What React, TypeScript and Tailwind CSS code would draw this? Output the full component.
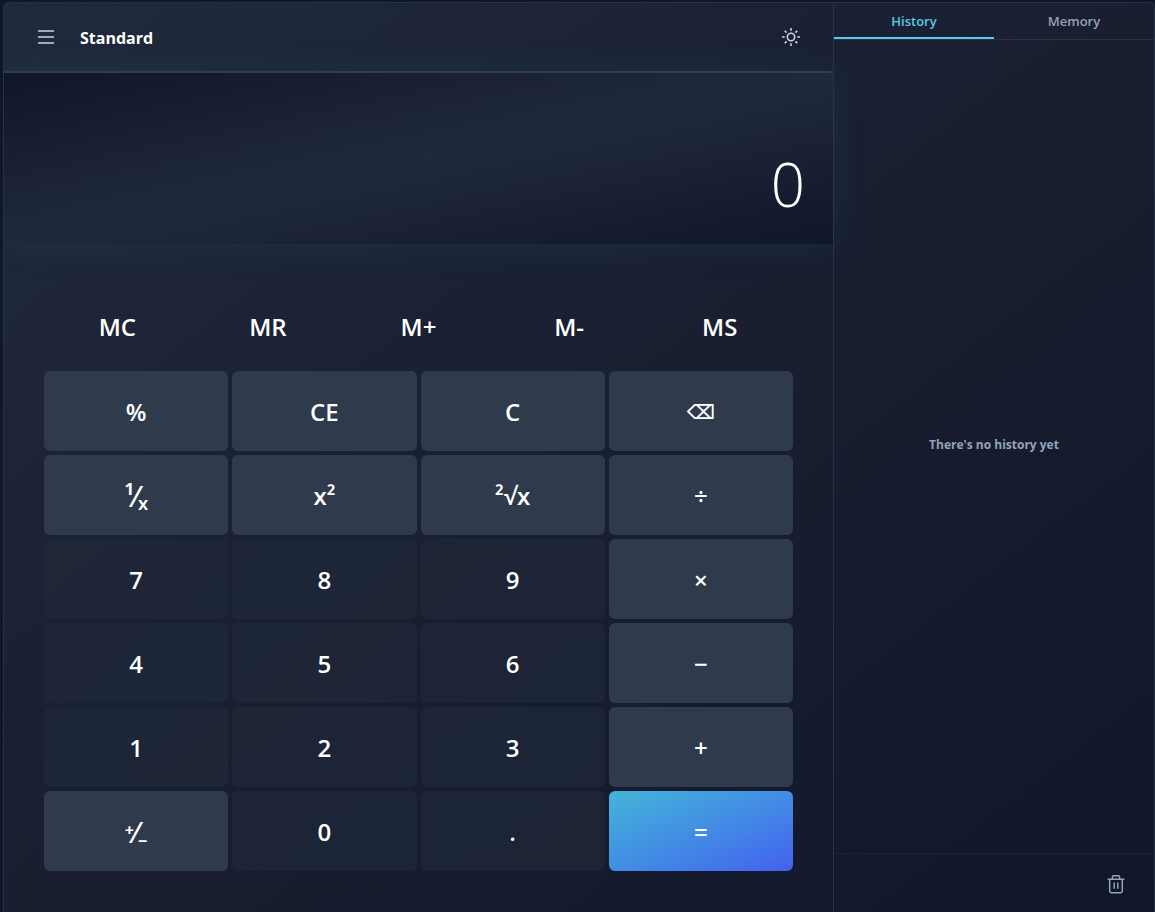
import { useState } from "react";

type KeyKind = "number" | "operator" | "equals";
type Key = { label: string; name: string; kind: KeyKind; size?: string };

const memoryKeys = [
  { label: "MC", name: "Memory clear" },
  { label: "MR", name: "Memory recall" },
  { label: "M+", name: "Memory add" },
  { label: "M-", name: "Memory subtract" },
  { label: "MS", name: "Memory store" },
];

const keys: Key[] = [
  { label: "%", name: "Percent", kind: "operator" },
  { label: "CE", name: "Clear entry", kind: "operator" },
  { label: "C", name: "Clear", kind: "operator" },
  { label: "⌫", name: "Backspace", kind: "operator", size: "text-xl" },
  { label: "¹⁄ₓ", name: "Reciprocal", kind: "operator", size: "text-[28px]" },
  { label: "x²", name: "Square", kind: "operator" },
  { label: "²√x", name: "Square root", kind: "operator" },
  { label: "÷", name: "Divide", kind: "operator" },
  { label: "7", name: "7", kind: "number" },
  { label: "8", name: "8", kind: "number" },
  { label: "9", name: "9", kind: "number" },
  { label: "×", name: "Multiply", kind: "operator" },
  { label: "4", name: "4", kind: "number" },
  { label: "5", name: "5", kind: "number" },
  { label: "6", name: "6", kind: "number" },
  { label: "−", name: "Subtract", kind: "operator" },
  { label: "1", name: "1", kind: "number" },
  { label: "2", name: "2", kind: "number" },
  { label: "3", name: "3", kind: "number" },
  { label: "+", name: "Add", kind: "operator" },
  { label: "⁺⁄₋", name: "Negate", kind: "operator", size: "text-[28px]" },
  { label: "0", name: "0", kind: "number" },
  { label: ".", name: "Decimal point", kind: "number" },
  { label: "=", name: "Equals", kind: "equals" },
];

const keyStyles: Record<KeyKind, string> = {
  number: "bg-[#1f283b]/70",
  operator: "bg-[#303a4d]",
  equals: "bg-gradient-to-br from-[#45b4d7] to-[#455fee]",
};

function MenuIcon() {
  return (
    <svg viewBox="0 0 16 14" className="h-3.5 w-4" stroke="currentColor" strokeWidth="1.5" aria-hidden="true">
      <path d="M0 .9h16M0 7h16M0 13.1h16" />
    </svg>
  );
}

function SunIcon() {
  return (
    <svg viewBox="0 0 20 20" className="size-5" fill="none" stroke="currentColor" strokeWidth="1.6" aria-hidden="true">
      <circle cx="10" cy="10" r="3.7" />
      <path d="M10 1v2.7M10 16.3V19M1 10h2.7M16.3 10H19M3.7 3.7l1.9 1.9M14.4 14.4l1.9 1.9M3.7 16.3l1.9-1.9M14.4 5.6l1.9-1.9" />
    </svg>
  );
}

function TrashIcon() {
  return (
    <svg viewBox="0 0 20 20" className="size-5" fill="none" stroke="currentColor" strokeWidth="1.5" strokeLinejoin="round" aria-hidden="true">
      <path d="M1.6 5.2h16.8M6.4 5.2V2.9c0-.7.4-1.2 1.1-1.2h5c.7 0 1.1.5 1.1 1.2v2.3M3.7 5.2v12.1c0 .9.5 1.4 1.4 1.4h9.8c.9 0 1.4-.5 1.4-1.4V5.2M8.2 8.4v6.4M11.8 8.4v6.4" />
    </svg>
  );
}

export default function App() {
  const [tab, setTab] = useState("History");

  return (
    <div className="flex h-screen overflow-hidden bg-[#0f172a] pl-[3px] pt-0.5 font-['Open_Sans','Noto_Sans','DejaVu_Sans',sans-serif] font-semibold text-white">
      <div className="flex min-w-0 flex-1 overflow-hidden rounded-t-md border border-b-0 border-[#293144] bg-gradient-to-br from-[#212a3d] via-[#191e31] to-[#11172a]">
        <main className="relative z-10 flex min-w-0 flex-1 flex-col">
          <header className="flex h-[70px] shrink-0 items-center border-b-2 border-[#30394b] px-8">
            <button type="button" aria-label="Open navigation" className="flex size-5 items-center justify-center text-[#cbd5e1]">
              <MenuIcon />
            </button>
            <h1 className="ml-6 flex-1 pt-0.5 text-base leading-6 font-bold">Standard</h1>
            <button type="button" aria-label="Toggle theme" className="text-[#cbd5e1]">
              <SunIcon />
            </button>
          </header>

          <output className="flex h-[171px] shrink-0 items-end justify-end bg-gradient-to-br from-[#11162a] via-[#20293b] to-[#11162a] pr-7 pb-5 text-[60px] font-light leading-[80px] shadow-[0_0_32px_rgba(34,140,180,0.14)]">
            0
          </output>

          <div className="px-10 pt-11">
            <div className="mb-1 grid grid-cols-5 gap-1">
              {memoryKeys.map((key) => (
                <button key={key.label} type="button" aria-label={key.name} className="h-[79px] pb-0.5 text-2xl">
                  {key.label}
                </button>
              ))}
            </div>
            <div className="grid grid-cols-4 gap-1">
              {keys.map((key) => (
                <button
                  key={key.name}
                  type="button"
                  aria-label={key.name}
                  className={`h-20 rounded-md pt-0.5 ${key.size ?? "text-2xl"} ${keyStyles[key.kind]}`}
                >
                  {key.label}
                </button>
              ))}
            </div>
          </div>
        </main>

        <aside className="flex w-[321px] shrink-0 flex-col border-l border-[#293144] leading-5 text-[#94a3b8]">
          <div role="tablist" className="flex h-[37px] shrink-0 border-b border-[#293144]">
            {["History", "Memory"].map((name) => (
              <button
                key={name}
                type="button"
                role="tab"
                aria-selected={tab === name}
                onClick={() => setTab(name)}
                className={`flex-1 border-b-2 pt-0.5 text-[13px] ${tab === name ? "border-[#56cbe9] text-[#56cbe9]" : "border-transparent"}`}
              >
                {name}
              </button>
            ))}
          </div>
          <div role="tabpanel" className="flex flex-1 items-center justify-center pb-1 text-xs font-bold">
            {tab === "History" ? "There's no history yet" : "There's nothing saved in memory"}
          </div>
          <footer className="flex h-[59px] shrink-0 items-center justify-end border-t border-[#1c2335] px-7 pt-0.5">
            <button type="button" aria-label="Clear history">
              <TrashIcon />
            </button>
          </footer>
        </aside>
      </div>
    </div>
  );
}
